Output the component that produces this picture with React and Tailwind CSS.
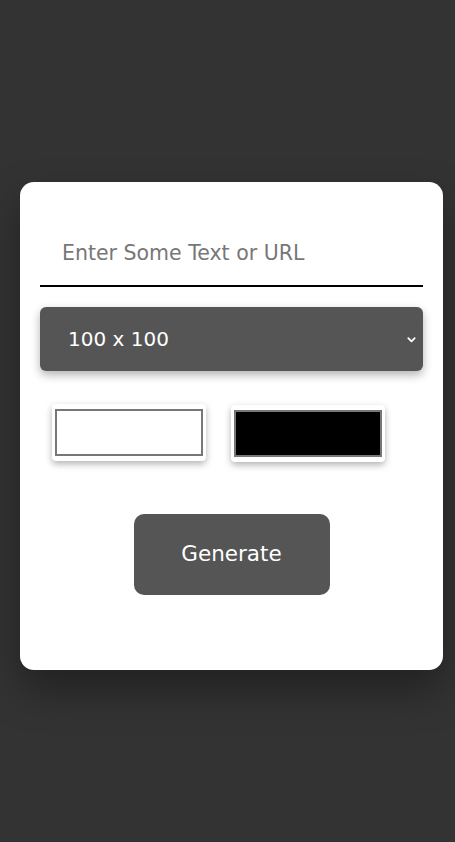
import { useState } from "react";

const sizes = ["100 x 100", "200 x 200", "300 x 300", "400 x 400"];

const App = () => {
  const [text, setText] = useState("");
  const [size, setSize] = useState(sizes[0]);

  return (
    <div
      className="min-h-screen bg-[#333333] pt-[182px] pl-[20px]"
      style={{ fontFamily: "'DejaVu Sans', 'Liberation Sans', sans-serif" }}
    >
      <div className="w-[423px] h-[488px] bg-white rounded-[14px] shadow-[0_20px_40px_rgba(0,0,0,0.35)] px-[20px] pt-[40px] flex flex-col">
        {/* Text input */}
        <input
          type="text"
          value={text}
          onChange={(e) => setText(e.target.value)}
          placeholder="Enter Some Text or URL"
          className="h-[65px] w-full border-b-2 border-black pl-[22px] pb-[2px] text-[20.5px] text-[#333] placeholder:text-[#777] outline-none"
        />

        {/* Size select */}
        <div className="relative mt-[20px]">
          <select
            value={size}
            onChange={(e) => setSize(e.target.value)}
            className="appearance-none w-full h-[64px] bg-[#555555] text-white text-[20px] pl-[28px] rounded-[6px] shadow-[0_4px_10px_rgba(0,0,0,0.3)] outline-none"
          >
            {sizes.map((s) => (
              <option key={s}>{s}</option>
            ))}
          </select>
          <svg
            className="absolute right-[6px] top-[27px] pointer-events-none"
            width="11"
            height="11"
            viewBox="0 0 12 12"
            fill="none"
            stroke="white"
            strokeWidth="2"
            strokeLinecap="round"
            strokeLinejoin="round"
          >
            <path d="M2.5 4.5 6 8l3.5-3.5" />
          </svg>
        </div>

        {/* Colour pickers */}
        <div className="flex items-start gap-[25px] mt-[33px] pl-[12px]">
          <div className="w-[154px] h-[57px] bg-white rounded-[4px] p-[3px] shadow-[0_3px_7px_rgba(0,0,0,0.3)]">
            <div className="w-full h-[47px] mt-[2px] border-2 border-[#777] bg-white" />
          </div>
          <div className="mt-px w-[154px] h-[57px] bg-white rounded-[4px] p-[3px] shadow-[0_3px_7px_rgba(0,0,0,0.3)]">
            <div className="w-full h-[47px] mt-[2px] border-2 border-[#777] bg-black" />
          </div>
        </div>

        {/* Generate */}
        <div className="flex justify-center mt-[52px]">
          <button className="w-[196px] h-[81px] bg-[#555555] text-white text-[21.5px] rounded-[10px]">
            Generate
          </button>
        </div>
      </div>
    </div>
  );
};

export default App;
